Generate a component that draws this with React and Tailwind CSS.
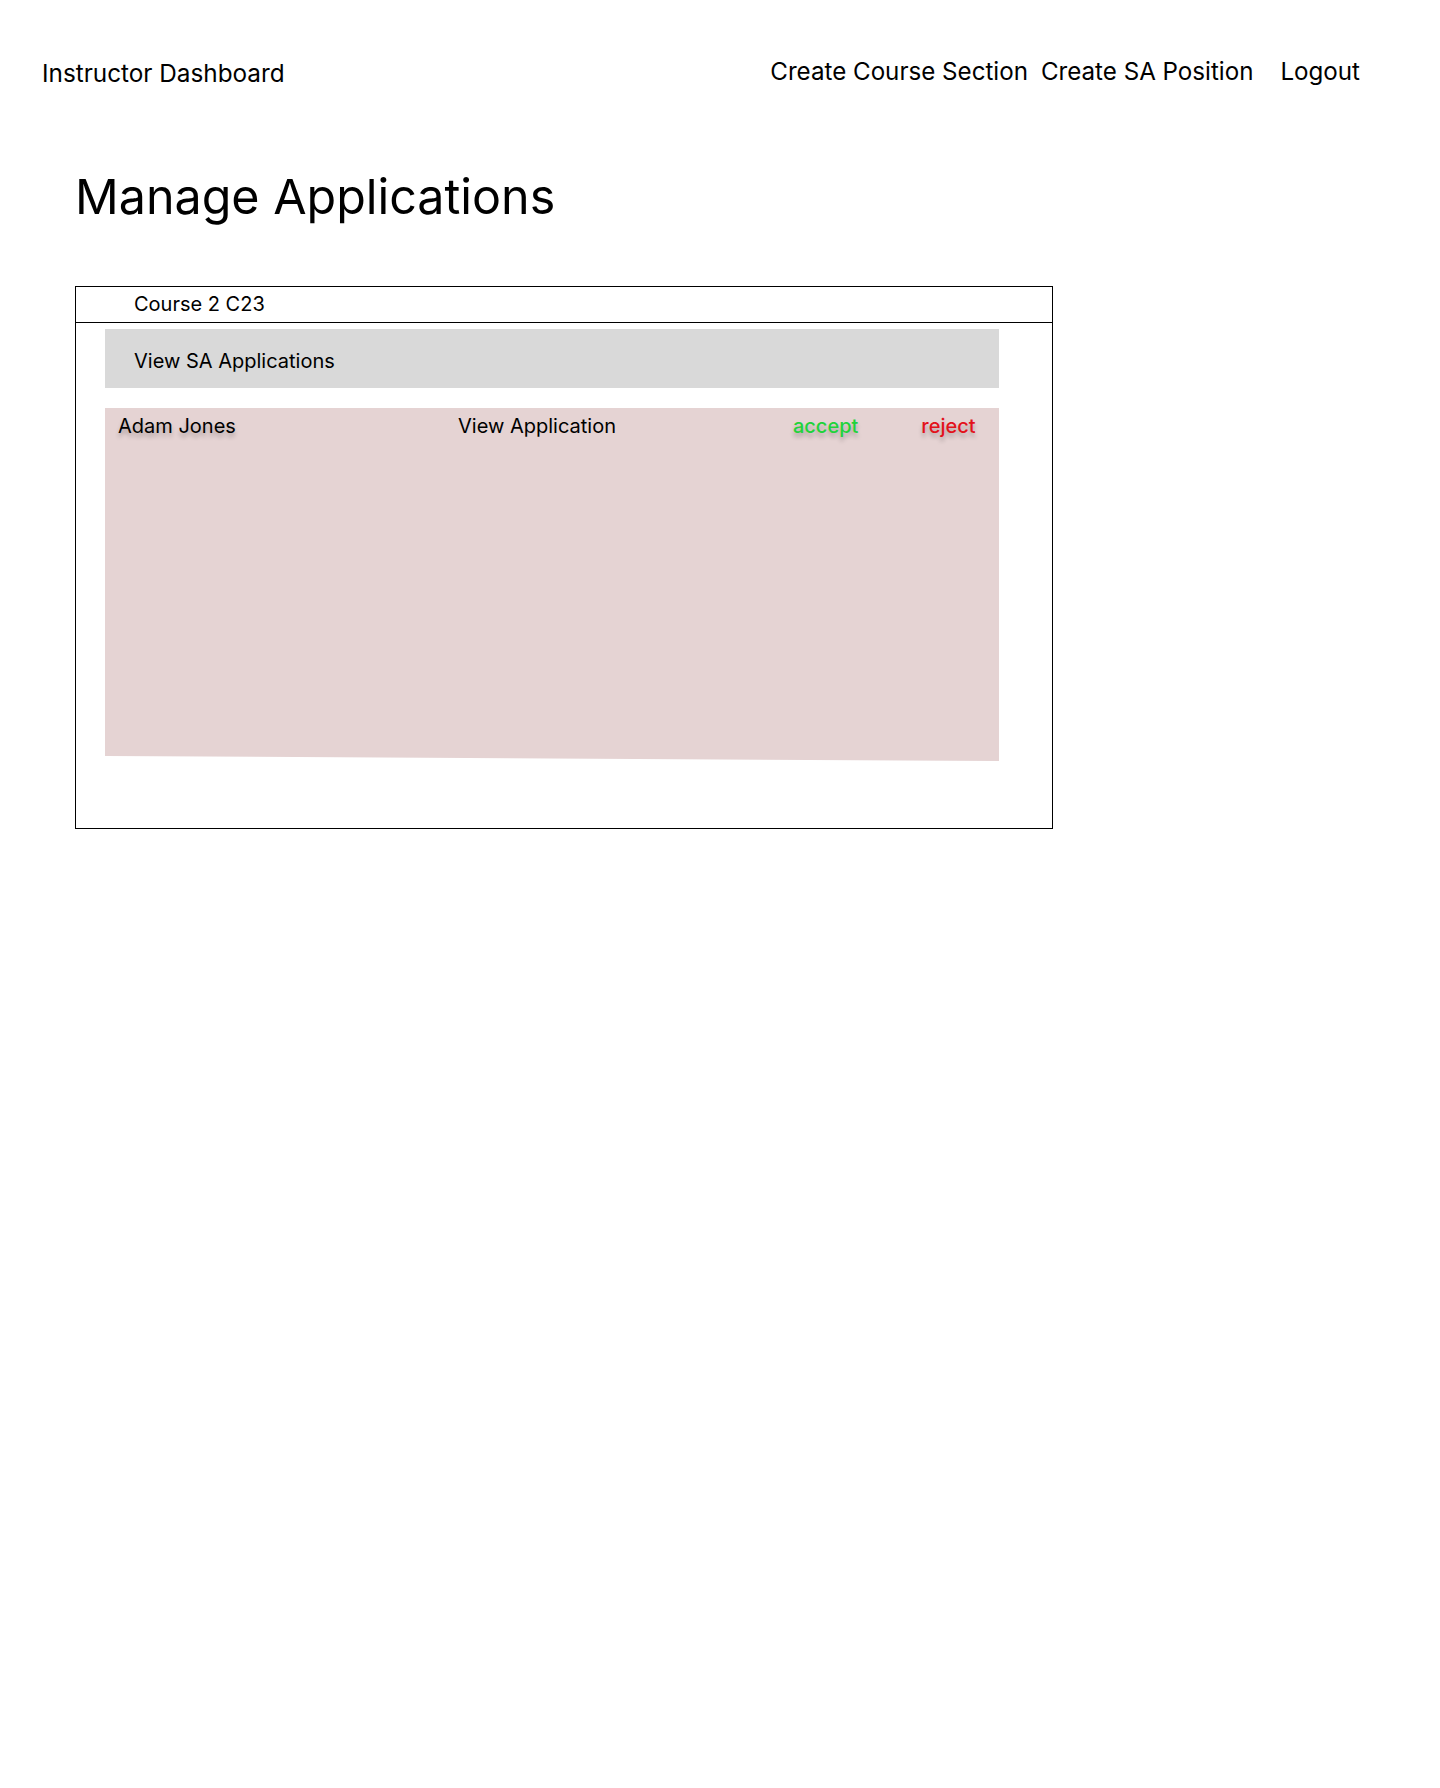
import { useState } from "react";

const applicants = [
  { name: "Adam Jones" },
];

const ApplicantRow = ({ name }) => {
  const [status, setStatus] = useState(null);

  return (
    <div className="flex items-start whitespace-nowrap text-[20px] leading-[28px] text-black">
      <span className="w-[340px] shrink-0 [text-shadow:0_4px_4px_rgba(0,0,0,0.25)]">{name}</span>
      <button className="shrink-0 cursor-pointer">View Application</button>
      <button
        onClick={() => setStatus("accepted")}
        className="ml-[177px] shrink-0 cursor-pointer font-medium text-[#1fd33b] [text-shadow:0_4px_4px_rgba(0,0,0,0.25)]"
      >
        accept
      </button>
      <button
        onClick={() => setStatus("rejected")}
        className="ml-[63px] shrink-0 cursor-pointer font-medium text-[#e3121b] [text-shadow:0_4px_4px_rgba(0,0,0,0.25)]"
      >
        reject
      </button>
      {status && <span className="sr-only">{status}</span>}
    </div>
  );
};

export default function App() {
  return (
    <div className="min-h-screen bg-white text-black font-['Inter','Noto_Sans',sans-serif]">
      {/* top nav */}
      <header className="flex items-start pl-[42px] pr-[80px] pt-[56px]">
        <span className="mt-[1px] text-[24.3px] leading-[32px]">Instructor Dashboard</span>
        <nav className="ml-auto flex items-start whitespace-nowrap text-[24.15px] leading-[32px]">
          <a href="#" className="cursor-pointer">Create Course Section</a>
          <a href="#" className="ml-[13px] cursor-pointer">Create SA Position</a>
          <a href="#" className="ml-[27px] cursor-pointer">Logout</a>
        </nav>
      </header>

      <main className="pl-[75px]">
        <h1 className="mt-[84px] text-[48.4px] leading-[48px]">Manage Applications</h1>

        {/* course card */}
        <section className="mt-[65px] w-[978px] h-[543px] border border-black">
          <div className="h-[36px] border-b border-black pl-[58px] pt-[3px] text-[20px] leading-[28px]">
            Course 2 C23
          </div>

          <div className="ml-[29px] mt-[6px] w-[894px] h-[59px] bg-[#d9d9d9] pl-[29px] pt-[18px] text-[20px] leading-[28px]">
            View SA Applications
          </div>

          <div className="ml-[29px] mt-[20px] w-[894px] h-[353px] bg-[#e5d3d3] pl-[13px] pt-[4px] [clip-path:polygon(0_0,100%_0,100%_100%,0_calc(100%-5px))]">
            {applicants.map((a) => (
              <ApplicantRow key={a.name} name={a.name} />
            ))}
          </div>
        </section>
      </main>
    </div>
  );
}
